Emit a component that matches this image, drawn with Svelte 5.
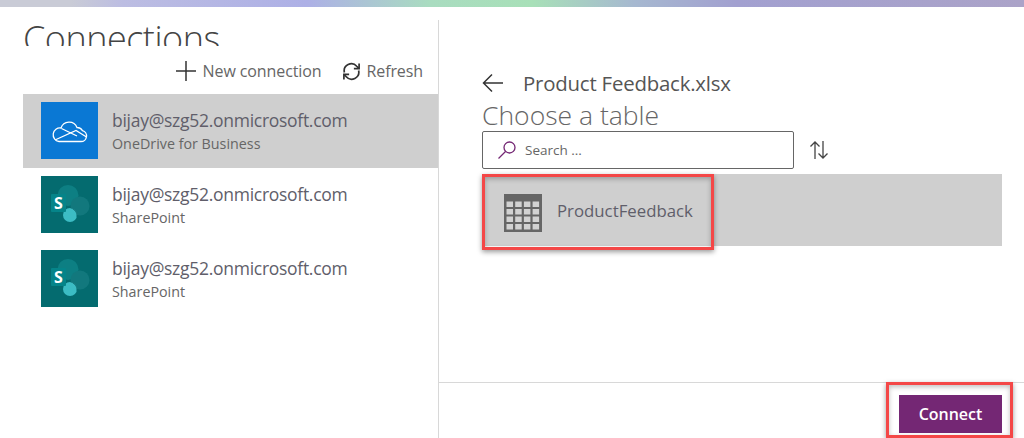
<script>
  const connections = [
    { email: 'bijay@szg52.onmicrosoft.com', type: 'OneDrive for Business', kind: 'onedrive', selected: true },
    { email: 'bijay@szg52.onmicrosoft.com', type: 'SharePoint', kind: 'sharepoint' },
    { email: 'bijay@szg52.onmicrosoft.com', type: 'SharePoint', kind: 'sharepoint' },
  ]
</script>

<div class="page">
  <div class="strip"></div>
  <div class="panes">
    <section class="left">
      <div class="title-clip"><h1>Connections</h1></div>
      <div class="toolbar">
        <span class="tool plus">
          <svg width="22" height="22" viewBox="0 0 22 22"><path d="M11 1v20M1 11h20" stroke="#333" stroke-width="1.5" fill="none" /></svg>
          New connection
        </span>
        <span class="tool">
          <svg width="19" height="19" viewBox="0 0 20 20" fill="none" stroke="#333" stroke-width="1.8">
            <path d="M2.500 11A7.500 7.500 0 0 1 15.500 4.500L17.500 6.500" />
            <path d="M17.500 9A7.500 7.500 0 0 1 4.500 15.500L2.500 13.500" />
            <path d="M18 1.500v5.500h-5.500M2 18.500V13h5.500" />
          </svg>
          Refresh
        </span>
      </div>
      <ul class="list">
        {#each connections as c}
          <li class="row" class:selected={c.selected}>
            <div class="icon {c.kind}">
              {#if c.kind === 'onedrive'}
                <svg width="36" height="24" viewBox="0 0 36 24" fill="none" stroke="#fff" stroke-width="1.300">
                  <path d="M7 22.500H29a5.500 5.500 0 0 0 1.500-10.800A6 6 0 0 0 25 8.500A8.500 8.500 0 0 0 9 9A6.800 6.800 0 0 0 7 22.500z" />
                  <path d="M9.500 9.500L25 17M3 21L24 11.500L34.500 18" />
                </svg>
              {:else}
                <svg width="57" height="57" viewBox="0 0 57 57">
                  <circle cx="27" cy="19.500" r="10.500" fill="#0d7f83" />
                  <circle cx="39" cy="30" r="9.500" fill="#12787d" />
                  <circle cx="29" cy="39" r="7" fill="#3cbcc4" />
                  <path d="M29 32a7 7 0 0 1 6.500 9.500a8 8 0 0 0-6.500-9.500z" fill="#0a5f63" />
                  <rect x="10" y="18" width="15" height="18" rx="1" fill="#058489" />
                  <text x="17.500" y="32.500" text-anchor="middle" class="s">S</text>
                </svg>
              {/if}
            </div>
            <div class="meta">
              <div class="email">{c.email}</div>
              <div class="type">{c.type}</div>
            </div>
          </li>
        {/each}
      </ul>
    </section>

    <section class="right">
      <div class="content">
        <div class="back">
          <svg width="21" height="20" viewBox="0 0 21 20" fill="none" stroke="#333" stroke-width="1.500"><path d="M21 10H1.500M10 1.500L1.500 10l8.500 8.500" /></svg>
          <span>Product Feedback.xlsx</span>
        </div>
        <h2>Choose a table</h2>
        <div class="search-row">
          <div class="search">
            <svg width="20" height="20" viewBox="0 0 20 20" fill="none" stroke="#742774" stroke-width="1.300"><circle cx="12.500" cy="7.500" r="5.500" /><path d="M8.500 11.500L1.500 18.500" /></svg>
            <span>Search ...</span>
          </div>
          <svg class="sort" width="20" height="20" viewBox="0 0 20 20" fill="none" stroke="#444" stroke-width="1.300"><path d="M6 19V2M1.500 6.500L6 2l4.500 4.500M14 1v17M9.500 13.500L14 18l4.500-4.500" /></svg>
        </div>
        <div class="table-row">
          <svg class="grid" width="38" height="38" viewBox="0 0 38 38">
            <rect width="38" height="38" fill="#666" />
            {#each [0, 1, 2, 3] as r}
              {#each [0, 1, 2, 3] as col}
                <rect x={2.500 + col * 8.700} y={7.500 + r * 7.500} width="6.500" height="5.500" fill="#d2d2d2" />
              {/each}
            {/each}
          </svg>
          <span>ProductFeedback</span>
          <div class="callout table-callout"></div>
        </div>
      </div>
      <footer>
        <button>Connect</button>
        <div class="callout connect-callout"></div>
      </footer>
    </section>
  </div>
</div>

<style>
  :global(body) {
    margin: 0;
    background: #fff;
  }

  .page {
    width: 1024px;
    height: 438px;
    display: flex;
    flex-direction: column;
    overflow: hidden;
    font-family: "Open Sans", "Noto Sans", sans-serif;
    color: #555;
  }

  .strip {
    height: 7px;
    flex: none;
    background: linear-gradient(90deg, #c9cbd6 0, #c9cbd6 7%, #bcbde2 12%, #adb0e6 30%, #a9dcc0 42%, #a8e0b8 52%, #a6b8d0 62%, #a2a0d0 72%, #aba3c8 100%);
  }

  .panes {
    flex: 1;
    display: flex;
    min-height: 0;
  }

  .left {
    width: 415px;
    margin-left: 23px;
    margin-top: 13px;
    border-right: 1px solid #d8d8d8;
    flex: none;
  }

  .title-clip {
    height: 26px;
    overflow: hidden;
  }

  h1 {
    margin: -5px 0 0;
    font-size: 36px;
    line-height: 48px;
    letter-spacing: -0.5px;
    font-weight: 300;
    color: #444;
  }

  .toolbar {
    height: 26px;
    margin-top: 12px;
    display: flex;
    justify-content: flex-end;
    align-items: center;
    gap: 21px;
    padding-right: 15px;
  }

  .tool {
    display: flex;
    align-items: center;
    gap: 5px;
    font-size: 16px;
    letter-spacing: -0.1px;
    color: #666;
  }

  .tool.plus {
    gap: 6px;
  }

  .list {
    list-style: none;
    margin: 10px 0 0;
    padding: 0;
  }

  .row {
    height: 74px;
    box-sizing: border-box;
    padding: 8px 0 0 18px;
    display: flex;
    gap: 14px;
  }

  .row.selected {
    background: #cfcfcf;
  }

  .icon {
    width: 57px;
    height: 57px;
    flex: none;
    display: flex;
    align-items: center;
    justify-content: center;
  }

  .icon.onedrive {
    background: #0a78d4;
  }

  .icon.sharepoint {
    background: #046b6f;
  }

  .s {
    fill: #fff;
    font-size: 16px;
    font-weight: 700;
    font-family: "Open Sans", sans-serif;
  }

  .meta {
    padding-top: 6px;
  }

  .email {
    font-size: 17.500px;
    line-height: 24px;
    letter-spacing: -0.28px;
    color: #605e6a;
  }

  .type {
    font-size: 14.300px;
    line-height: 24px;
    color: #666;
  }

  .right {
    flex: 1;
    display: flex;
    flex-direction: column;
    min-width: 0;
  }

  .content {
    flex: 1;
    padding: 62px 22px 0 43px;
  }

  .back {
    display: flex;
    align-items: center;
    gap: 20px;
    height: 28px;
    font-size: 20.400px;
    letter-spacing: -0.2px;
    color: #555;
  }

  h2 {
    margin: 2px 0 0;
    font-size: 26.500px;
    line-height: 32px;
    font-weight: 300;
    color: #666;
  }

  .search-row {
    display: flex;
    align-items: center;
    gap: 15px;
    margin-bottom: 5px;
  }

  .search {
    width: 312px;
    height: 38px;
    box-sizing: border-box;
    border: 1px solid #666;
    border-radius: 2px;
    display: flex;
    align-items: center;
    gap: 8px;
    padding-left: 14px;
    font-size: 13.500px;
    color: #666;
  }

  .table-row {
    position: relative;
    height: 72px;
    background: #cfcfcf;
    display: flex;
    align-items: center;
    gap: 15px;
    padding-left: 22px;
    font-size: 16.800px;
    color: #605e6a;
  }

  .grid {
    margin-top: 6px;
  }

  .callout {
    position: absolute;
    box-sizing: border-box;
    border: 3px solid #f44747;
    box-shadow: 0 2px 5px rgba(0, 0, 0, 0.4), inset 0 2px 5px rgba(0, 0, 0, 0.25);
    pointer-events: none;
  }

  .table-callout {
    left: 0;
    top: 0;
    width: 232px;
    height: 76px;
  }

  footer {
    position: relative;
    height: 56px;
    box-sizing: border-box;
    flex: none;
    border-top: 1px solid #d8d8d8;
    display: flex;
    justify-content: flex-end;
    align-items: flex-start;
    padding: 12px 22px 0 0;
  }

  button {
    width: 103px;
    height: 38px;
    border: none;
    padding: 0;
    background: #742774;
    color: #fff;
    font-family: inherit;
    font-size: 16px;
    font-weight: 600;
  }

  .connect-callout {
    right: 11px;
    top: -1px;
    width: 127px;
    height: 56px;
  }
</style>
